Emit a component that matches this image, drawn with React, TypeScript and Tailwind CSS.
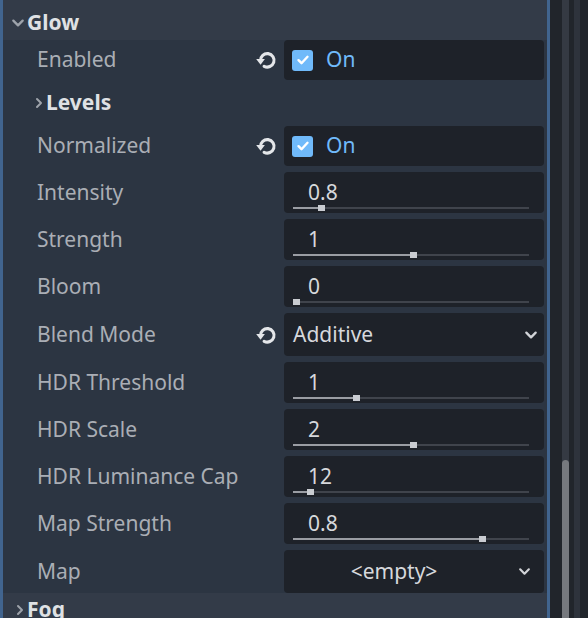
import React from "react";

type Prop =
  | { kind: "check"; label: string; reset?: boolean }
  | { kind: "slider"; label: string; value: string; ratio: number }
  | { kind: "enum"; label: string; value: string; reset?: boolean }
  | { kind: "resource"; label: string; value: string }
  | { kind: "group"; label: string };

const props: Prop[] = [
  { kind: "check", label: "Enabled", reset: true },
  { kind: "group", label: "Levels" },
  { kind: "check", label: "Normalized", reset: true },
  { kind: "slider", label: "Intensity", value: "0.8", ratio: 0.11 },
  { kind: "slider", label: "Strength", value: "1", ratio: 0.51 },
  { kind: "slider", label: "Bloom", value: "0", ratio: 0 },
  { kind: "enum", label: "Blend Mode", value: "Additive", reset: true },
  { kind: "slider", label: "HDR Threshold", value: "1", ratio: 0.26 },
  { kind: "slider", label: "HDR Scale", value: "2", ratio: 0.51 },
  { kind: "slider", label: "HDR Luminance Cap", value: "12", ratio: 0.06 },
  { kind: "slider", label: "Map Strength", value: "0.8", ratio: 0.81 },
  { kind: "resource", label: "Map", value: "<empty>" },
];

function ResetIcon() {
  return (
    <svg width="24" height="24" viewBox="0 0 16 16" fill="none">
      <path
        d="M3.7 8.4A4.5 4.5 0 1 1 6.1 12.2"
        stroke="#e4e6e9"
        strokeWidth="2.1"
        strokeLinecap="round"
      />
      <path d="M0.8 7.4h5.8L3.7 11.1z" fill="#e4e6e9" />
    </svg>
  );
}

function Chevron({ dir, color = "#9ea3ab", size = 12 }: { dir: "down" | "right"; color?: string; size?: number }) {
  return (
    <svg width={size} height={size} viewBox="0 0 12 12" fill="none">
      <path
        d={dir === "down" ? "M2 4l4 4 4-4" : "M4 2l4 4-4 4"}
        stroke={color}
        strokeWidth="2"
        strokeLinecap="round"
        strokeLinejoin="round"
      />
    </svg>
  );
}

function Editor({ p }: { p: Prop }) {
  if (p.kind === "check") {
    return (
      <div className="flex h-[40px] w-[260px] items-center rounded-[4px] bg-[#1e2229] pl-[8px]">
        <div className="flex h-[21px] w-[21px] items-center justify-center rounded-[3px] bg-[#70bafa]">
          <svg width="14" height="14" viewBox="0 0 14 14" fill="none">
            <path d="M2.5 7.2l3 3 6-6.4" stroke="#ffffff" strokeWidth="2.4" strokeLinecap="round" strokeLinejoin="round" />
          </svg>
        </div>
        <span className="ml-[13px] text-[21px] text-[#70bafa]">On</span>
      </div>
    );
  }
  if (p.kind === "slider") {
    return (
      <div className="flex h-[41px] w-[260px] flex-col rounded-[4px] bg-[#1e2229]">
        <div className="mt-[8px] h-[24px] pl-[24px] text-[21px] leading-[24px] text-[#d6d8dc]">{p.value}</div>
        <div className="relative ml-[9px] mr-[15px] mt-[3px] h-[2px] bg-[#40444c]">
          <div className="h-full bg-[#9a9da3]" style={{ width: `${p.ratio * 100}%` }} />
          <div
            className="absolute top-[-2px] h-[6px] w-[7px] bg-[#c9ccd1]"
            style={{ left: `calc(${p.ratio * 100}% - ${p.ratio * 6}px)` }}
          />
        </div>
      </div>
    );
  }
  if (p.kind === "enum") {
    return (
      <div className="flex h-[43px] w-[260px] items-center justify-between rounded-[4px] bg-[#1e2229] pl-[9px] pr-[6px]">
        <span className="text-[21px] text-[#d6d8dc]">{p.value}</span>
        <Chevron dir="down" color="#d2d4d8" size={14} />
      </div>
    );
  }
  if (p.kind === "resource") {
    return (
      <div className="flex h-[43px] w-[260px] items-center rounded-[4px] bg-[#1e2229] pr-[13px]">
        <span className="flex-1 pr-[14px] text-center text-[21px] text-[#d6d8dc]">{p.value}</span>
        <Chevron dir="down" color="#d2d4d8" size={13} />
      </div>
    );
  }
  return null;
}

function Row({ p }: { p: Prop }) {
  if (p.kind === "group") {
    return (
      <div className="flex h-[46px] items-center pl-[30px]">
        <Chevron dir="right" />
        <span className="ml-[1px] text-[21px] font-bold text-[#dfe1e4]">{p.label}</span>
      </div>
    );
  }
  const reset = "reset" in p && p.reset;
  return (
    <div className="flex items-center">
      <span className="flex-1 pl-[34px] text-[21px] text-[#aaaeb5]">{p.label}</span>
      <div className="flex w-[30px] justify-start pl-[1px]">{reset && <ResetIcon />}</div>
      <Editor p={p} />
    </div>
  );
}

export default function App() {
  const top = props.slice(0, 3);
  const rest = props.slice(3);
  return (
    <div
      className="flex h-[618px] w-[588px] overflow-hidden bg-[#2c3542]"
      style={{ fontFamily: '"Noto Sans", "Open Sans", sans-serif' }}
    >
      {/* section accent */}
      <div className="w-[3px] shrink-0 bg-[#41648e]" />

      <div className="flex w-[544px] shrink-0 flex-col">
        <div className="flex h-[40px] shrink-0 items-center bg-[#333b48] pl-[8px] pt-[5px]">
          <Chevron dir="down" size={14} />
          <span className="ml-[2px] text-[21px] font-bold text-[#dfe1e4]">Glow</span>
        </div>

        <div className="flex flex-col pr-[3px]">
          {top.map((p) => (
            <Row key={p.label} p={p} />
          ))}
        </div>
        <div className="mt-[6px] flex flex-col gap-[6px] pr-[3px]">
          {rest.map((p) => (
            <Row key={p.label} p={p} />
          ))}
        </div>

        <div className="flex h-[30px] shrink-0 items-center bg-[#333b48] pl-[11px] pt-[4px]">
          <Chevron dir="right" />
          <span className="ml-[1px] text-[21px] font-bold text-[#dfe1e4]">Fog</span>
        </div>
      </div>

      <div className="w-[3px] shrink-0 bg-[#41648e]" />

      {/* scrollbar gutter */}
      <div className="flex flex-1 bg-[#21252b]">
        <div className="ml-[12px] flex w-[7px] flex-col bg-[#353a43]">
          <div className="flex-1" />
          <div className="h-[158px] rounded-t-[4px] bg-[#76797e]" />
        </div>
        <div className="ml-[5px] w-[6px] bg-[#2e333c]" />
      </div>
    </div>
  );
}
